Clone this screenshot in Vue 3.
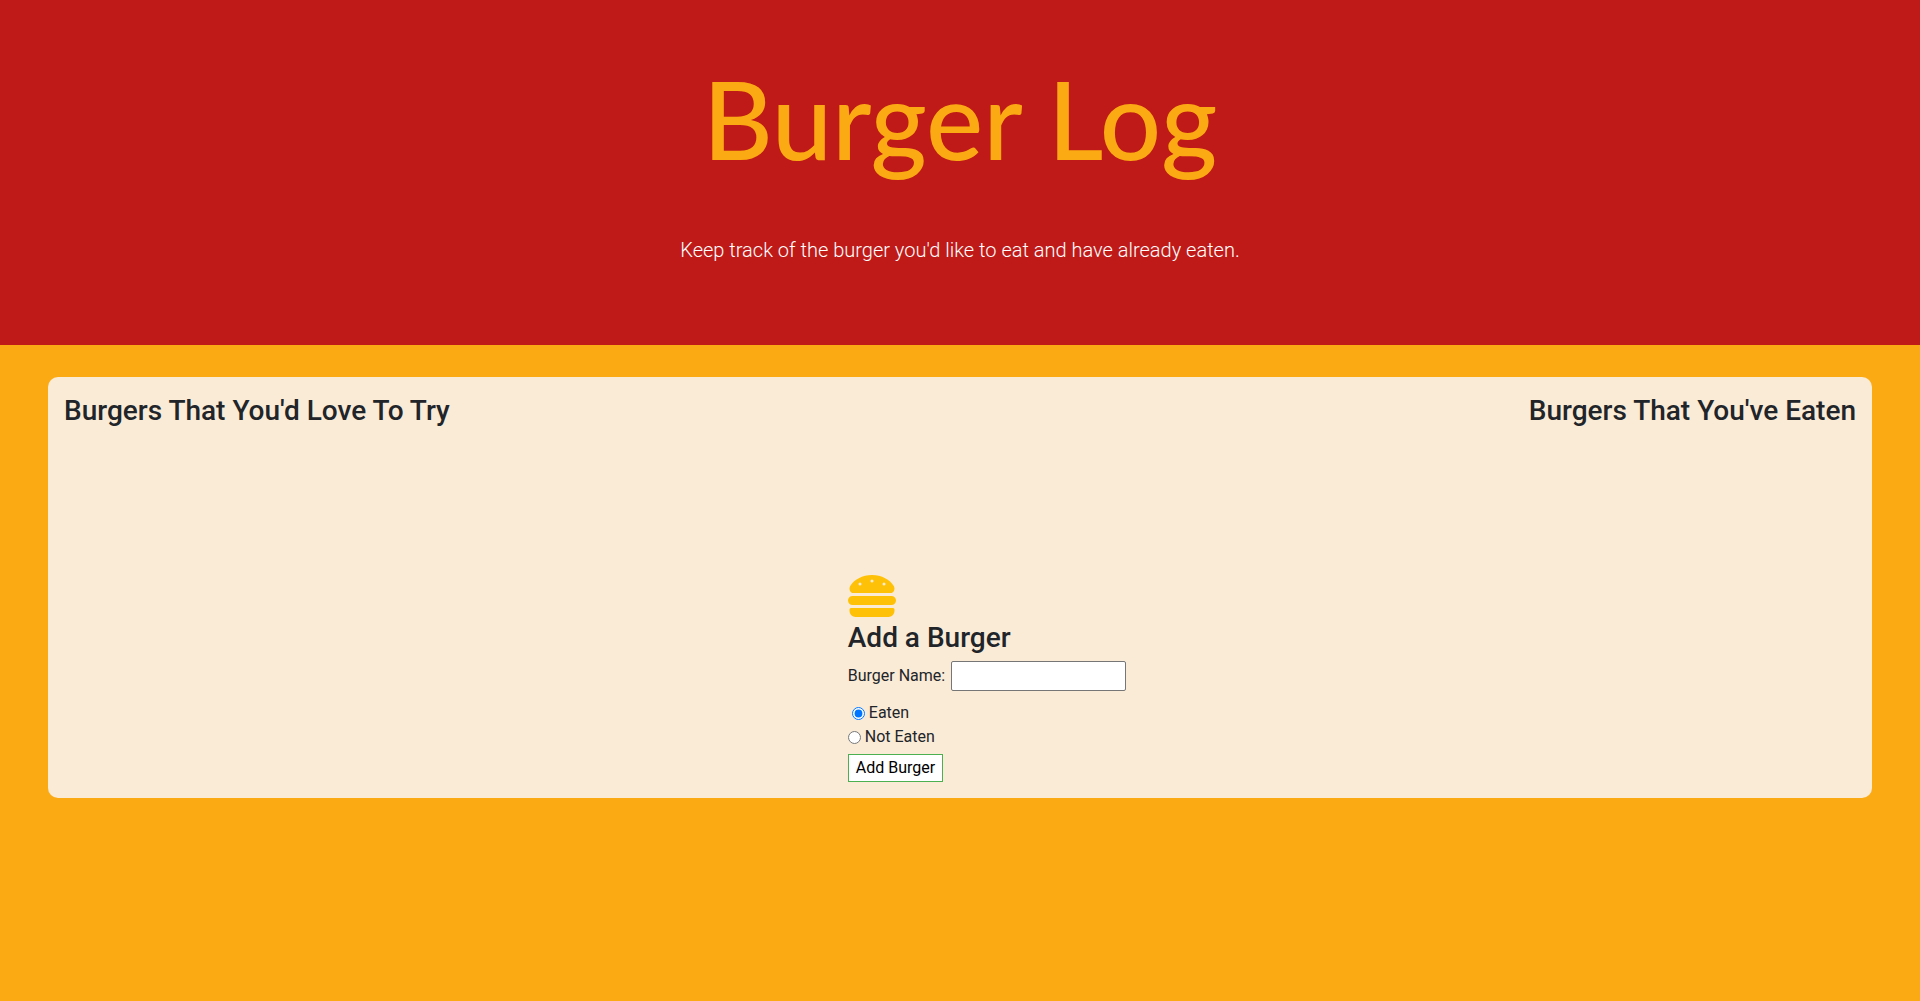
<script setup>
import { ref } from 'vue'

const name = ref('')
const eaten = ref('yes')
</script>

<template>
  <div class="page">
    <header class="banner">
      <h1>Burger Log</h1>
      <p>Keep track of the burger you'd like to eat and have already eaten.</p>
    </header>

    <main class="card">
      <h2>Burgers That You'd Love To Try</h2>

      <form @submit.prevent>
        <svg class="burger" viewBox="0 0 512 512" aria-hidden="true">
          <path fill="currentColor" d="M464 256H48a48 48 0 0 0 0 96h416a48 48 0 0 0 0-96zm16 128H32a16 16 0 0 0-16 16v16a64 64 0 0 0 64 64h352a64 64 0 0 0 64-64v-16a16 16 0 0 0-16-16zM58.64 224h394.72c34.57 0 54.62-43.9 34.82-75.88C448 83.2 359.55 32.1 256 32c-103.54.1-192 51.2-232.18 116.11C4 180.09 24.07 224 58.64 224zM384 112a16 16 0 1 1-16 16 16 16 0 0 1 16-16zM256 80a16 16 0 1 1-16 16 16 16 0 0 1 16-16zm-128 32a16 16 0 1 1-16 16 16 16 0 0 1 16-16z" />
        </svg>
        <h2>Add a Burger</h2>
        <div class="field">
          <label for="burger-name">Burger Name:</label>
          <input id="burger-name" v-model="name" type="text">
        </div>
        <div class="option first">
          <input id="eaten-yes" v-model="eaten" type="radio" name="eaten" value="yes">
          <label for="eaten-yes">Eaten</label>
        </div>
        <div class="option">
          <input id="eaten-no" v-model="eaten" type="radio" name="eaten" value="no">
          <label for="eaten-no">Not Eaten</label>
        </div>
        <button type="submit">Add Burger</button>
      </form>

      <h2>Burgers That You've Eaten</h2>
    </main>
  </div>
</template>

<style>
body {
  margin: 0;
  background: #fcaa13;
}
</style>

<style scoped>
.page {
  font-family: Roboto, "Liberation Sans", sans-serif;
  font-size: 16px;
  line-height: 24px;
  color: #212529;
}

.banner {
  padding: 64px 32px;
  background: #bf1a18;
  text-align: center;
}

.banner h1 {
  margin: 0 0 62px;
  font-family: Lato, sans-serif;
  font-size: 108px;
  font-weight: 500;
  line-height: 109px;
  color: #fcaa13;
}

.banner p {
  margin: 0 0 16px;
  font-size: 20px;
  font-weight: 300;
  line-height: 30px;
  color: #fff;
}

.card {
  display: flex;
  justify-content: space-between;
  align-items: flex-start;
  margin: 32px 48px;
  padding: 16px;
  border-radius: 10px;
  background: #faebd7;
}

h2 {
  margin: 0 0 5px;
  font-size: 28px;
  font-weight: 500;
  line-height: 36px;
}

form {
  display: flex;
  flex-direction: column;
  align-items: flex-start;
  width: 283px;
  margin-top: 179px;
}

.burger {
  width: 48px;
  height: 48px;
  color: #ffc107;
}

.field {
  display: flex;
  align-items: center;
  gap: 6px;
  margin-bottom: 10px;
}

.field input {
  box-sizing: border-box;
  width: 175px;
  height: 30px;
  padding: 1px 2px;
  border: 1px solid #767676;
  border-radius: 2px;
  background: #fff;
  font: inherit;
}

.option {
  display: flex;
  align-items: center;
  gap: 4px;
}

.option.first {
  padding-left: 4px;
}

.option input {
  width: 13px;
  height: 13px;
  margin: 0;
}

button {
  margin-top: 5px;
  padding: 1px 7px;
  border: 1px solid #4caf50;
  background: #fff;
  font: inherit;
  color: #000;
}
</style>
